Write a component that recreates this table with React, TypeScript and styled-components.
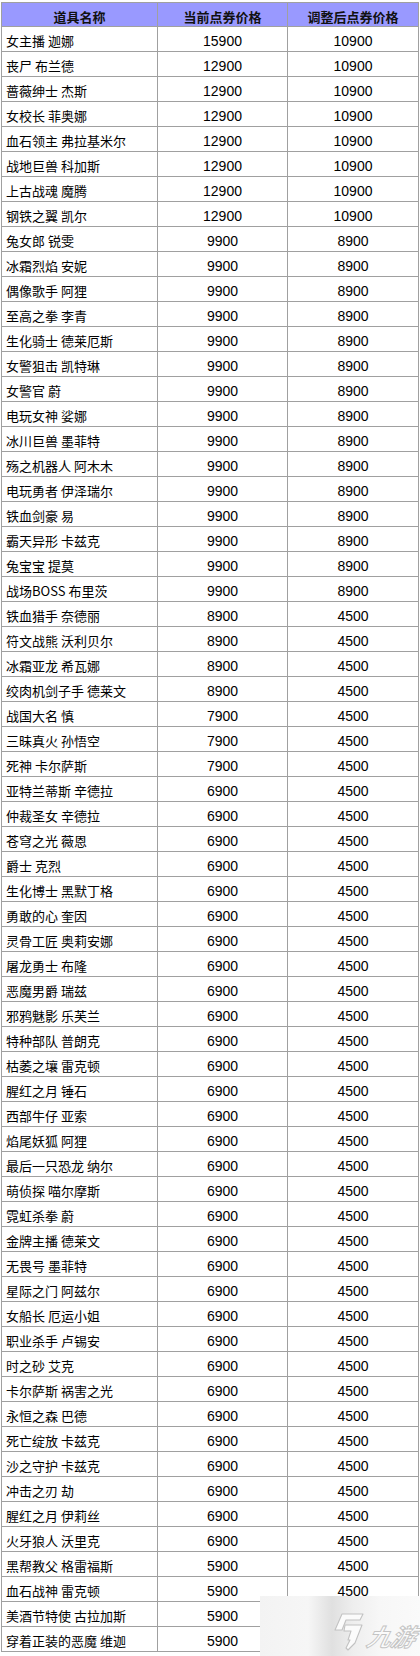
import React from 'react';
import styled, { createGlobalStyle } from 'styled-components';

const GlobalStyle = createGlobalStyle`
    html, body {
        margin: 0;
        padding: 0;
        background: #fff;
    }
    body {
        font-family: 'Liberation Sans', 'Noto Sans CJK SC', sans-serif;
        color: #000;
    }
`;

type Row = [string, number, number];

const rows: Row[] = [
    ['女主播 迦娜', 15900, 10900],
    ['丧尸 布兰德', 12900, 10900],
    ['蔷薇绅士 杰斯', 12900, 10900],
    ['女校长 菲奥娜', 12900, 10900],
    ['血石领主 弗拉基米尔', 12900, 10900],
    ['战地巨兽 科加斯', 12900, 10900],
    ['上古战魂 魔腾', 12900, 10900],
    ['钢铁之翼 凯尔', 12900, 10900],
    ['兔女郎 锐雯', 9900, 8900],
    ['冰霜烈焰 安妮', 9900, 8900],
    ['偶像歌手 阿狸', 9900, 8900],
    ['至高之拳 李青', 9900, 8900],
    ['生化骑士 德莱厄斯', 9900, 8900],
    ['女警狙击 凯特琳', 9900, 8900],
    ['女警官 蔚', 9900, 8900],
    ['电玩女神 娑娜', 9900, 8900],
    ['冰川巨兽 墨菲特', 9900, 8900],
    ['殇之机器人 阿木木', 9900, 8900],
    ['电玩勇者 伊泽瑞尔', 9900, 8900],
    ['铁血剑豪 易', 9900, 8900],
    ['霸天异形 卡兹克', 9900, 8900],
    ['兔宝宝 提莫', 9900, 8900],
    ['战场BOSS 布里茨', 9900, 8900],
    ['铁血猎手 奈德丽', 8900, 4500],
    ['符文战熊 沃利贝尔', 8900, 4500],
    ['冰霜亚龙 希瓦娜', 8900, 4500],
    ['绞肉机剑子手 德莱文', 8900, 4500],
    ['战国大名 慎', 7900, 4500],
    ['三昧真火 孙悟空', 7900, 4500],
    ['死神 卡尔萨斯', 7900, 4500],
    ['亚特兰蒂斯 辛德拉', 6900, 4500],
    ['仲裁圣女 辛德拉', 6900, 4500],
    ['苍穹之光 薇恩', 6900, 4500],
    ['爵士 克烈', 6900, 4500],
    ['生化博士 黑默丁格', 6900, 4500],
    ['勇敢的心 奎因', 6900, 4500],
    ['灵骨工匠 奥莉安娜', 6900, 4500],
    ['屠龙勇士 布隆', 6900, 4500],
    ['恶魔男爵 瑞兹', 6900, 4500],
    ['邪鸦魅影 乐芙兰', 6900, 4500],
    ['特种部队 普朗克', 6900, 4500],
    ['枯萎之壤 雷克顿', 6900, 4500],
    ['腥红之月 锤石', 6900, 4500],
    ['西部牛仔 亚索', 6900, 4500],
    ['焰尾妖狐 阿狸', 6900, 4500],
    ['最后一只恐龙 纳尔', 6900, 4500],
    ['萌侦探 喵尔摩斯', 6900, 4500],
    ['霓虹杀拳 蔚', 6900, 4500],
    ['金牌主播 德莱文', 6900, 4500],
    ['无畏号 墨菲特', 6900, 4500],
    ['星际之门 阿兹尔', 6900, 4500],
    ['女船长 厄运小姐', 6900, 4500],
    ['职业杀手 卢锡安', 6900, 4500],
    ['时之砂 艾克', 6900, 4500],
    ['卡尔萨斯 祸害之光', 6900, 4500],
    ['永恒之森 巴德', 6900, 4500],
    ['死亡绽放 卡兹克', 6900, 4500],
    ['沙之守护 卡兹克', 6900, 4500],
    ['冲击之刃 劫', 6900, 4500],
    ['腥红之月 伊莉丝', 6900, 4500],
    ['火牙狼人 沃里克', 6900, 4500],
    ['黑帮教父 格雷福斯', 5900, 4500],
    ['血石战神 雷克顿', 5900, 4500],
    ['美酒节特使 古拉加斯', 5900, 4500],
    ['穿着正装的恶魔 维迦', 5900, 4500],
];

const Page = styled.div`
    position: relative;
    min-height: 1656px;
    padding: 2px 0 0 1px;
    box-sizing: border-box;
    overflow: hidden;
`;

const Table = styled.table`
    width: 417px;
    border-collapse: collapse;
    table-layout: fixed;
`;

const HeadCell = styled.th<{ $width: number }>`
    width: ${p => p.$width}px;
    height: 23px;
    box-sizing: border-box;
    padding: 4px 0 0;
    border: 1px solid #a0a0a0;
    background: #9999ff;
    font-family: 'Noto Sans CJK SC', sans-serif;
    font-size: 13px;
    font-weight: 700;
    line-height: 19px;
    text-align: center;
    color: #111;
`;

const Cell = styled.td<{ $name?: boolean }>`
    height: 24px;
    box-sizing: border-box;
    padding: ${p => (p.$name ? '4px 0 0 4px' : '5px 0 0')};
    border: 1px solid #a0a0a0;
    font-family: ${p => (p.$name ? "'Noto Sans CJK SC'" : "'Liberation Sans', 'Noto Sans CJK SC'")}, sans-serif;
    font-size: ${p => (p.$name ? 13 : 14)}px;
    line-height: ${p => (p.$name ? 20 : 19)}px;
    text-align: ${p => (p.$name ? 'left' : 'center')};
    white-space: nowrap;
    overflow: hidden;
`;

const Watermark = styled.div`
    position: absolute;
    left: 260px;
    top: 1596px;
    width: 160px;
    height: 60px;
    display: flex;
    align-items: flex-end;
    gap: 4px;
    padding: 0 0 5px 72px;
    box-sizing: border-box;
    background: linear-gradient(90deg, #f3f3f3 0%, #f6f6f6 30%, #e0e0e0 45%, #eeeeee 58%, #f7f7f7 75%, #fafafa 100%);
`;

const LogoText = styled.span`
    font-family: 'Noto Sans CJK SC', sans-serif;
    font-size: 24px;
    font-weight: 700;
    font-style: italic;
    line-height: 30px;
    color: #fbfbfb;
    -webkit-text-stroke: 1px #c4c4c4;
    transform: skewX(-14deg);
    white-space: nowrap;
`;

const LogoMark = () => (
    <svg width="32" height="38" viewBox="0 0 32 38" fill="#fbfbfb" stroke="#c2c2c2" strokeWidth="1.1" strokeLinejoin="round">
        <path d="M10 1 L31 1 L28 7 L14 7 L10 17 L3 17 Z" />
        <path d="M13 12 L30 12 L23 30 L16 37 L14 35 L18 27 L16 27 L19 18 L12 18 Z" />
    </svg>
);

const App: React.FC = () => {
    return (
        <>
            <GlobalStyle />
            <Page>
                <Table>
                    <thead>
                        <tr>
                            <HeadCell $width={156}>道具名称</HeadCell>
                            <HeadCell $width={130}>当前点券价格</HeadCell>
                            <HeadCell $width={131}>调整后点券价格</HeadCell>
                        </tr>
                    </thead>
                    <tbody>
                        {rows.map(([name, now, after]) => (
                            <tr key={name}>
                                <Cell $name>{name}</Cell>
                                <Cell>{now}</Cell>
                                <Cell>{after}</Cell>
                            </tr>
                        ))}
                    </tbody>
                </Table>
                <Watermark>
                    <LogoMark />
                    <LogoText>九游</LogoText>
                </Watermark>
            </Page>
        </>
    );
};

export default App;
